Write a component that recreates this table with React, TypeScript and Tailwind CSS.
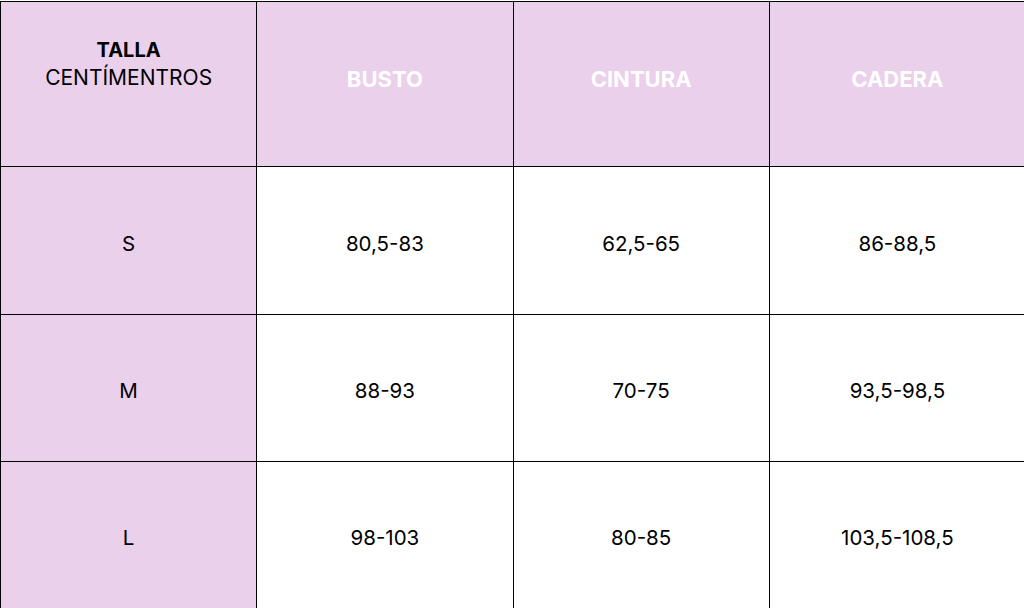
const HEAD = ["BUSTO", "CINTURA", "CADERA"];

const ROWS = [
  { size: "S", values: ["80,5-83", "62,5-65", "86-88,5"] },
  { size: "M", values: ["88-93", "70-75", "93,5-98,5"] },
  { size: "L", values: ["98-103", "80-85", "103,5-108,5"] },
];

export default function App() {
  return (
    <div
      className="w-[1024px] h-[608px] overflow-hidden bg-white pt-px"
      style={{ fontFamily: "Inter, 'Liberation Sans', sans-serif" }}
    >
      <table className="w-[1026px] table-fixed border-collapse text-black">
        <thead>
          <tr className="h-[165px] bg-[#ebd0ec]">
            <th className="w-[256px] border border-black align-top pt-[35px] text-center font-normal">
              <div className="text-[20px] font-bold leading-[26px]">TALLA</div>
              <div className="text-[21px] leading-[30px]">CENTÍMENTROS</div>
            </th>
            {HEAD.map((h) => (
              <th
                key={h}
                className="w-[256px] border border-black pb-[9px] text-center text-[22px] font-bold text-white"
              >
                {h}
              </th>
            ))}
          </tr>
        </thead>
        <tbody>
          {ROWS.map((r, i) => (
            <tr key={r.size} className={i === 0 ? "h-[148px]" : "h-[147px]"}>
              <td className="border border-black bg-[#ebd0ec] pt-[7px] text-center text-[20.5px]">
                {r.size}
              </td>
              {r.values.map((v) => (
                <td
                  key={v}
                  className="border border-black bg-white pt-[7px] text-center text-[20.5px]"
                >
                  {v}
                </td>
              ))}
            </tr>
          ))}
        </tbody>
      </table>
    </div>
  );
}
